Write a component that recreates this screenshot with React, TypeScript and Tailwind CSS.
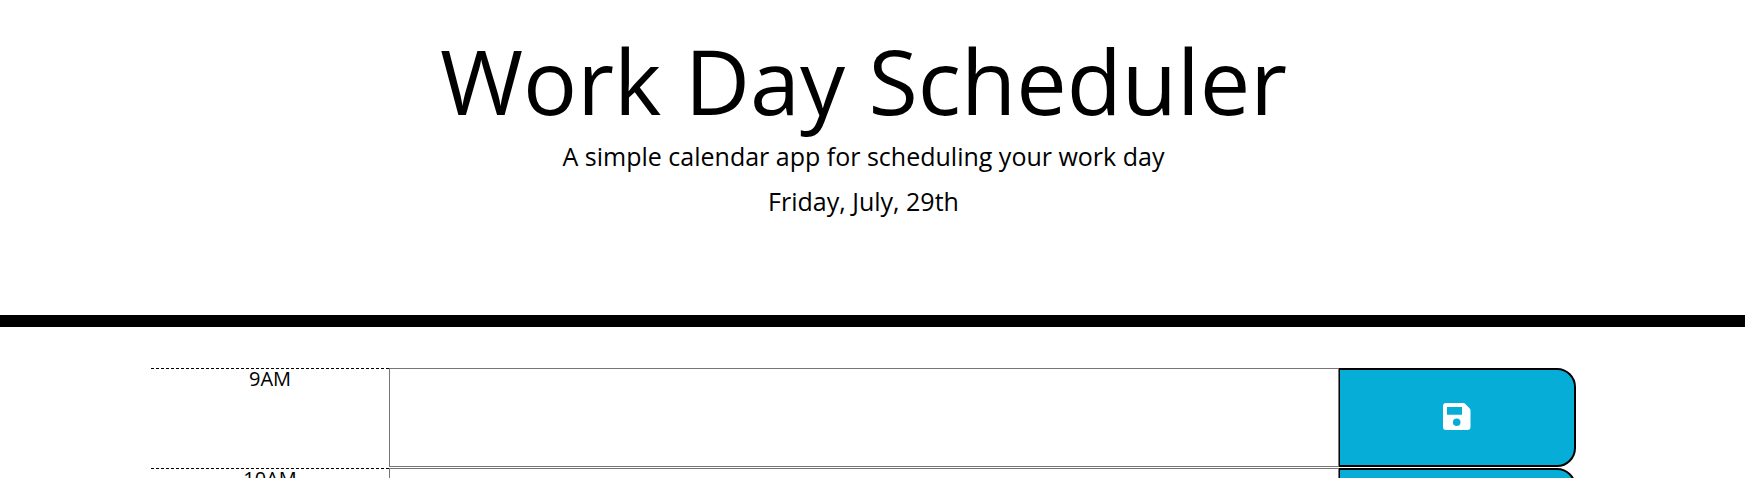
const hours = ["9AM", "10AM"];

function SaveIcon() {
  return (
    <svg viewBox="0 0 28 27" className="h-[27px] w-[28px] fill-white" aria-label="Save">
      <path
        fillRule="evenodd"
        d="M3 0H20.2Q21.3 0 22.1 .8L26.7 5.4Q27.5 6.2 27.5 7.3V24Q27.5 27 24.5 27H3Q0 27 0 24V3Q0 0 3 0ZM4 4V11.7H19V4ZM13.7 15.5A3.8 3.8 0 1 0 13.7 23.1A3.8 3.8 0 1 0 13.7 15.5Z"
      />
    </svg>
  );
}

function TimeBlock({ hour }: { hour: string }) {
  return (
    <div className="flex h-[100px]">
      <div className="h-full w-[238px] shrink-0 border-t border-dashed border-black text-center text-[20px] leading-[20px]">
        {hour}
      </div>
      <textarea
        aria-label={hour}
        className="z-10 block h-[99px] w-[950px] shrink-0 resize-none border border-[#767676] bg-white"
      />
      <button className="-ml-px flex h-[99px] w-[238px] shrink-0 items-center justify-center rounded-r-[19px] border-2 border-black bg-[#06aed7] pb-[2px]">
        <SaveIcon />
      </button>
    </div>
  );
}

export default function App() {
  return (
    <div className="h-[478px] overflow-hidden bg-white font-['Open_Sans',sans-serif] text-black">
      <header className="h-[327px] border-b-12 border-black pt-[26px] pr-[18px] text-center">
        <h1 className="text-[90px] leading-[108px]">Work Day Scheduler</h1>
        <p className="mt-[3px] text-[25px] leading-[38px]">A simple calendar app for scheduling your work day</p>
        <p className="mt-[7px] text-[25px] leading-[38px]">Friday, July, 29th</p>
      </header>
      <main className="ml-[151px] w-[1425px] pt-[41px]">
        {hours.map((hour) => (
          <TimeBlock key={hour} hour={hour} />
        ))}
      </main>
    </div>
  );
}
